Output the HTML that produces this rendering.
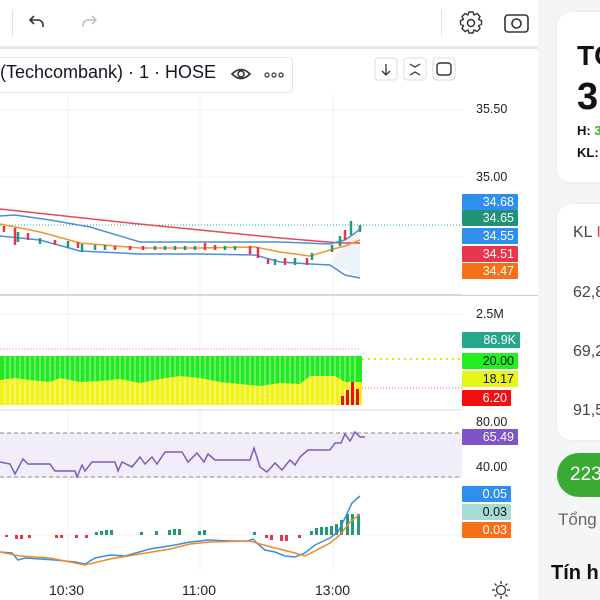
<!DOCTYPE html>
<html><head><meta charset="utf-8"><style>
body{margin:0;width:600px;height:600px;overflow:hidden;background:#fff;font-family:"Liberation Sans",sans-serif;position:relative}
div{white-space:nowrap}
.lbl{position:absolute;left:462px;width:56px;height:16px;font-size:12.5px;line-height:16px;text-align:right;box-sizing:border-box;padding-right:4px;color:#fff;border-radius:1px}
.ax{position:absolute;left:476px;font-size:12.5px;color:#222}
.side{position:absolute;left:538px;top:0;width:62px;height:600px;background:#f4f5f7}
.card{position:absolute;left:557px;background:#fff;border-radius:14px;width:80px;box-shadow:0 0 6px rgba(0,0,0,.06)}
</style></head><body>
<div style="position:absolute;left:0;top:0;width:538px;height:46px;border-bottom:3px solid #e6e8ee"></div>
<div style="position:absolute;left:12px;top:10px;width:1px;height:26px;background:#e0e0e0"></div>
<div style="position:absolute;left:441px;top:10px;width:1px;height:26px;background:#e0e0e0"></div>
<svg style="position:absolute;left:0;top:0" width="538" height="46">
<path d="M34 24 l-4 -4 4 -4 M30 20 h8 a5 5 0 0 1 5 5 v2" fill="none" stroke="#333" stroke-width="1.6"/>
<path d="M92 24 l4 -4 -4 -4 M96 20 h-8 a5 5 0 0 0 -5 5 v2" fill="none" stroke="#bbb" stroke-width="1.4"/>
<circle cx="471" cy="23" r="3.5" fill="none" stroke="#333" stroke-width="1.5"/>
<path d="M469 12 h4 l1 3 3-1.5 3 3-1.5 3 3 1 v4 l-3 1 1.5 3-3 3-3-1.5-1 3 h-4 l-1-3-3 1.5-3-3 1.5-3-3-1 v-4 l3-1-1.5-3 3-3 3 1.5Z" fill="none" stroke="#333" stroke-width="1.4" stroke-linejoin="round"/>
<rect x="505" y="15" width="23" height="17" rx="3" fill="none" stroke="#333" stroke-width="1.6"/>
<circle cx="516.5" cy="23.5" r="4.5" fill="none" stroke="#333" stroke-width="1.6"/>
</svg>
<div style="position:absolute;left:-10px;top:57px;width:301px;height:34px;border:1px solid #e3e3e3;border-radius:5px;background:#fff"></div>
<div style="position:absolute;left:0;top:62px;font-size:18px;color:#131722">(Techcombank) · 1 · HOSE</div>
<svg style="position:absolute;left:230px;top:64px" width="60" height="20"><path d="M2 10 Q11 1 20 10 Q11 19 2 10Z" fill="none" stroke="#333" stroke-width="1.6"/><circle cx="11" cy="10" r="3" fill="none" stroke="#333" stroke-width="1.6"/><circle cx="37" cy="11" r="2" fill="none" stroke="#333" stroke-width="1.2"/><circle cx="44" cy="11" r="2" fill="none" stroke="#333" stroke-width="1.2"/><circle cx="51" cy="11" r="2" fill="none" stroke="#333" stroke-width="1.2"/></svg>
<svg style="position:absolute;left:372px;top:56px" width="90" height="30">
<rect x="3" y="2" width="22" height="22" rx="3" fill="none" stroke="#ddd"/><path d="M14 8 v11 M10 15 l4 4 4 -4" fill="none" stroke="#333" stroke-width="1.3"/>
<rect x="32" y="2" width="22" height="22" rx="3" fill="none" stroke="#ddd"/><path d="M38 8 l5 3 5 -3 M38 19 l5 -3 5 3" fill="none" stroke="#333" stroke-width="1.3"/>
<rect x="61" y="2" width="22" height="22" rx="3" fill="none" stroke="#ddd"/><rect x="65" y="7" width="14" height="12" rx="3" fill="none" stroke="#333" stroke-width="1.4"/>
</svg>
<svg style="position:absolute;left:0;top:49px" width="462" height="521" viewBox="0 49 462 521">
<g stroke="#f0f1f3"><line x1="68" y1="95" x2="68" y2="570"/><line x1="200" y1="95" x2="200" y2="570"/><line x1="333" y1="95" x2="333" y2="570"/>
<line x1="0" y1="110" x2="462" y2="110"/><line x1="0" y1="177" x2="462" y2="177"/><line x1="0" y1="314" x2="462" y2="314"/><line x1="0" y1="410" x2="462" y2="410"/><line x1="0" y1="535" x2="462" y2="535"/></g>
<line x1="0" y1="295" x2="462" y2="295" stroke="#ccc" stroke-width="1.5"/>
<line x1="0" y1="410" x2="462" y2="410" stroke="#ddd"/>
<line x1="0" y1="477" x2="462" y2="477" stroke="#ddd"/>
<line x1="0" y1="225" x2="462" y2="225" stroke="#2a9" stroke-dasharray="1 2"/>
<path d="M330 262 L340 250 L350 236 L360 230 L360 277 L340 268 L330 262Z" fill="#eef3fa"/>
<path d="M0 209 L120 222 L200 230 L280 238 L340 243 L360 243" fill="none" stroke="#e8485a" stroke-width="1.5"/>
<path d="M0 216 L15 215 L50 220 L90 227 L140 242 L200 242 L280 242 L330 244 L345 240 L355 233 L360 229" fill="none" stroke="#4c8fdc" stroke-width="1.5"/>
<path d="M0 224 L40 232 L80 243 L140 248 L200 248 L255 247 L280 252 L310 256 L330 250 L345 246 L360 240" fill="none" stroke="#f0962a" stroke-width="1.5"/>
<path d="M0 236 L40 240 L80 251 L140 254 L200 254 L255 255 L280 262 L310 264 L330 265 L345 275 L360 278" fill="none" stroke="#4c8fdc" stroke-width="1.5"/>
<g stroke-width="2.5">
<g stroke="#e8334a"><line x1="4" y1="226" x2="4" y2="232"/><line x1="15" y1="228" x2="15" y2="245"/><line x1="28" y1="233" x2="28" y2="240"/><line x1="55" y1="240" x2="55" y2="245"/><line x1="78" y1="242" x2="78" y2="248"/><line x1="115" y1="246" x2="115" y2="250"/><line x1="130" y1="246" x2="130" y2="250"/><line x1="143" y1="246" x2="143" y2="250"/><line x1="205" y1="243" x2="205" y2="250"/><line x1="215" y1="245" x2="215" y2="250"/><line x1="250" y1="246" x2="250" y2="254"/><line x1="258" y1="247" x2="258" y2="258"/><line x1="268" y1="259" x2="268" y2="264"/><line x1="285" y1="258" x2="285" y2="265"/><line x1="307" y1="258" x2="307" y2="265"/><line x1="345" y1="230" x2="345" y2="240"/></g>
<g stroke="#22997a"><line x1="18" y1="232" x2="18" y2="242"/><line x1="40" y1="238" x2="40" y2="244"/><line x1="68" y1="241" x2="68" y2="248"/><line x1="82" y1="244" x2="82" y2="252"/><line x1="95" y1="245" x2="95" y2="250"/><line x1="105" y1="245" x2="105" y2="250"/><line x1="155" y1="246" x2="155" y2="250"/><line x1="165" y1="246" x2="165" y2="250"/><line x1="175" y1="246" x2="175" y2="250"/><line x1="185" y1="246" x2="185" y2="250"/><line x1="195" y1="246" x2="195" y2="250"/><line x1="225" y1="246" x2="225" y2="250"/><line x1="235" y1="246" x2="235" y2="250"/><line x1="275" y1="259" x2="275" y2="265"/><line x1="295" y1="258" x2="295" y2="265"/><line x1="312" y1="253" x2="312" y2="260"/><line x1="332" y1="245" x2="332" y2="252"/><line x1="340" y1="236" x2="340" y2="246"/><line x1="351" y1="221" x2="351" y2="235"/><line x1="360" y1="225" x2="360" y2="232"/></g>
</g>
<line x1="0" y1="349" x2="360" y2="349" stroke="#f4b0b8" stroke-dasharray="2 1"/>
<rect x="0" y="356" width="362" height="49" fill="#f2f21a"/>
<path d="M0 356 H362 V382 L345 382 L335 376 L310 376 L300 384 L280 383 L260 386 L240 384 L220 382 L200 378 L180 376 L160 379 L140 383 L120 379 L100 381 L80 382 L60 378 L50 382 L30 380 L15 378 L0 380Z" fill="#22e822"/>
<g stroke="#fff" stroke-width="1" opacity=".6"><path d="M5 356V405M10 356V405M15 356V405M20 356V405M25 356V405M30 356V405M35 356V405M40 356V405M45 356V405M50 356V405M55 356V405M60 356V405M65 356V405M70 356V405M75 356V405M80 356V405M85 356V405M90 356V405M95 356V405M100 356V405M105 356V405M110 356V405M115 356V405M120 356V405M125 356V405M130 356V405M135 356V405M140 356V405M145 356V405M150 356V405M155 356V405M160 356V405M165 356V405M170 356V405M175 356V405M180 356V405M185 356V405M190 356V405M195 356V405M200 356V405M205 356V405M210 356V405M215 356V405M220 356V405M225 356V405M230 356V405M235 356V405M240 356V405M245 356V405M250 356V405M255 356V405M260 356V405M265 356V405M270 356V405M275 356V405M280 356V405M285 356V405M290 356V405M295 356V405M300 356V405M305 356V405M310 356V405M315 356V405M320 356V405M325 356V405M330 356V405M335 356V405M340 356V405M345 356V405M350 356V405M355 356V405"/></g>
<line x1="362" y1="359" x2="462" y2="359" stroke="#e6e600" stroke-dasharray="2 4" stroke-width="2"/>
<line x1="362" y1="388" x2="462" y2="388" stroke="#f66" stroke-dasharray="1 2"/>
<g fill="#e8101a"><rect x="341" y="396" width="3" height="9"/><rect x="346" y="390" width="3" height="15"/><rect x="351" y="382" width="3" height="23"/><rect x="356" y="389" width="3" height="16"/></g>
<rect x="0" y="433" width="462" height="44" fill="#f1eef9"/>
<line x1="0" y1="433" x2="462" y2="433" stroke="#888" stroke-dasharray="4 3"/>
<line x1="0" y1="477" x2="462" y2="477" stroke="#888" stroke-dasharray="4 3"/>
<path d="M0 462 L10 464 L15 474 L23 459 L28 464 L50 464 L55 471 L75 471 L77 477 L82 465 L85 471 L92 462 L115 462 L118 471 L122 462 L132 467 L140 457 L145 464 L152 457 L157 464 L165 452 L182 452 L188 462 L197 453 L204 462 L208 454 L215 460 L250 460 L254 448 L260 467 L267 472 L275 463 L282 470 L290 460 L295 465 L300 457 L308 450 L330 450 L335 443 L341 443 L345 434 L350 441 L355 432 L360 437 L365 437" fill="none" stroke="#7b5cbd" stroke-width="1.5"/>
<g fill="#22997a"><rect x="95" y="532" width="3" height="3"/><rect x="100" y="531" width="3" height="4"/><rect x="105" y="530" width="3" height="5"/><rect x="110" y="530" width="3" height="5"/><rect x="140" y="532" width="3" height="3"/><rect x="155" y="531" width="3" height="4"/><rect x="168" y="530" width="3" height="5"/><rect x="173" y="529" width="3" height="6"/><rect x="178" y="529" width="3" height="6"/><rect x="198" y="531" width="3" height="4"/><rect x="203" y="530" width="3" height="5"/><rect x="253" y="532" width="3" height="3"/><rect x="310" y="531" width="3" height="4"/><rect x="315" y="528" width="3" height="7"/><rect x="320" y="527" width="3" height="8"/><rect x="325" y="527" width="3" height="8"/><rect x="330" y="526" width="3" height="9"/><rect x="335" y="524" width="3" height="11"/><rect x="340" y="520" width="3" height="15"/><rect x="346" y="514" width="3" height="21"/><rect x="351" y="514" width="3" height="21"/><rect x="357" y="514" width="3" height="21"/></g>
<g fill="#e8334a"><rect x="5" y="535" width="3" height="2"/><rect x="15" y="535" width="3" height="4"/><rect x="20" y="535" width="3" height="4"/><rect x="28" y="535" width="3" height="3"/><rect x="55" y="535" width="3" height="3"/><rect x="60" y="535" width="3" height="3"/><rect x="75" y="535" width="3" height="3"/><rect x="85" y="535" width="3" height="3"/><rect x="265" y="535" width="3" height="3"/><rect x="270" y="535" width="3" height="5"/><rect x="280" y="535" width="3" height="6"/><rect x="285" y="535" width="3" height="6"/><rect x="298" y="535" width="3" height="3"/></g>
<path d="M0 552 L12 553 L18 560 L25 558 L55 560 L75 562 L85 564 L95 558 L110 555 L125 556 L150 549 L175 545 L190 542 L200 541 L208 540 L230 541 L248 541 L253 539 L258 544 L265 550 L275 552 L285 556 L295 557 L305 553 L315 545 L330 538 L338 532 L345 518 L352 503 L360 496" fill="none" stroke="#3a8fe0" stroke-width="1.5"/>
<path d="M0 552 L20 556 L50 558 L75 563 L85 565 L110 559 L140 554 L170 549 L190 544 L210 542 L250 541 L260 544 L275 548 L295 553 L305 556 L315 551 L330 543 L340 535 L350 522 L360 514" fill="none" stroke="#f08a24" stroke-width="1.5"/>
</svg>
<div class="ax" style="top:102px">35.50</div>
<div class="ax" style="top:170px">35.00</div>
<div class="lbl" style="top:194px;background:#2f8fec">34.68</div>
<div class="lbl" style="top:210px;background:#1f9278">34.65</div>
<div class="lbl" style="top:228px;background:#2f8fec">34.55</div>
<div class="lbl" style="top:246px;background:#e8364d">34.51</div>
<div class="lbl" style="top:263px;background:#f57018">34.47</div>
<div style="position:absolute;left:462px;top:295px;width:76px;height:1px;background:#ccc"></div>
<div class="ax" style="top:307px">2.5M</div>
<div class="lbl" style="top:332px;background:#26a68a;width:58px">86.9K</div>
<div class="lbl" style="top:353px;background:#22f022;color:#111">20.00</div>
<div class="lbl" style="top:371px;background:#e8f51a;color:#111">18.17</div>
<div class="lbl" style="top:390px;background:#f01010;width:49px">6.20</div>
<div class="ax" style="top:415px">80.00</div>
<div class="lbl" style="top:429px;background:#7d55c7">65.49</div>
<div class="ax" style="top:460px">40.00</div>
<div class="lbl" style="top:486px;background:#2f8fec;width:49px">0.05</div>
<div class="lbl" style="top:504px;background:#a6dcd2;color:#111;width:49px">0.03</div>
<div class="lbl" style="top:522px;background:#f57018;width:49px">0.03</div>
<div style="position:absolute;left:49px;top:582px;font-size:14px;color:#222">10:30</div>
<div style="position:absolute;left:182px;top:582px;font-size:14px;color:#222">11:00</div>
<div style="position:absolute;left:315px;top:582px;font-size:14px;color:#222">13:00</div>
<svg style="position:absolute;left:491px;top:580px" width="20" height="20"><circle cx="10" cy="10" r="4.5" fill="none" stroke="#333" stroke-width="1.3"/><path d="M10 1v3M10 16v3M1 10h3M16 10h3M3.6 3.6l2 2M14.4 14.4l2 2M3.6 16.4l2-2M14.4 5.6l2-2" stroke="#333" stroke-width="1.3"/></svg>
<div class="side"></div>
<div class="card" style="top:12px;height:170px"></div>
<div style="position:absolute;left:577px;top:40px;font-size:28px;font-weight:bold;color:#111">TC</div>
<div style="position:absolute;left:577px;top:76px;font-size:38px;font-weight:bold;color:#111">3</div>
<div style="position:absolute;left:577px;top:123px;font-size:13px;font-weight:bold;color:#111">H: <span style="color:#3b3">3</span></div>
<div style="position:absolute;left:577px;top:145px;font-size:13px;font-weight:bold;color:#111">KL:</div>
<div class="card" style="top:204px;height:236px"></div>
<div style="position:absolute;left:573px;top:224px;font-size:16px;color:#444">KL <span style="color:#e44">I</span></div>
<div style="position:absolute;left:573px;top:284px;font-size:16px;color:#444">62,8</div>
<div style="position:absolute;left:573px;top:343px;font-size:16px;color:#444">69,2</div>
<div style="position:absolute;left:573px;top:402px;font-size:16px;color:#444">91,5</div>
<div style="position:absolute;left:557px;top:453px;width:80px;height:44px;border-radius:22px;background:#3aaa35"></div>
<div style="position:absolute;left:570px;top:464px;font-size:19px;color:#fff">223</div>
<div style="position:absolute;left:558px;top:510px;font-size:17px;color:#666">Tổng</div>
<div style="position:absolute;left:551px;top:562px;font-size:20px;font-weight:bold;color:#111">Tín h</div>
</body></html>
